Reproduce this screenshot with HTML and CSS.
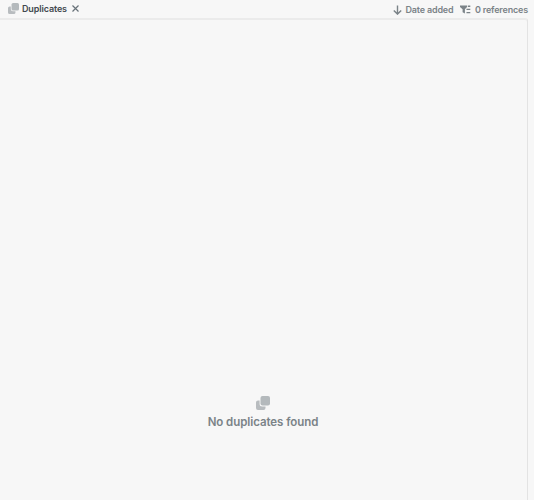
FILE: index.html
```html
<!DOCTYPE html>
<html lang="en">
<head>
<meta charset="utf-8">
<title>Duplicates</title>
<link rel="stylesheet" href="styles.css">
</head>
<body>
<header class="toolbar">
  <div class="tab">
    <svg class="tab-icon" viewBox="0 0 14 14"><path class="back" d="M3.6 4.5H2Q0 4.500 0 6.500V12Q0 14 2 14H7.500Q9.500 14 9.500 12V10.500H6.100Q3.600 10.500 3.600 8Z"/><rect class="front" x="4.500" y="0" width="9.500" height="9.500" rx="2"/></svg>
    <span class="tab-name">Duplicates</span>
    <svg class="close" viewBox="0 0 7 7"><path d="M.5.5 6.500 6.500M6.500.5.5 6.500"/></svg>
  </div>
  <div class="controls">
    <svg class="arrow" viewBox="0 0 9 10"><path d="M4.500.5V9M.8 5.400 4.500 9.100 8.200 5.400"/></svg>
    <span class="sort">Date added</span>
    <svg class="filter" viewBox="0 0 11 9"><path d="M0 .5H7V2L4.900 4.300V8.600L2.600 7.300V4.300L0 2Z"/><path d="M7.800 .6H10.300V1.900H7.800ZM6.500 3.800H10.300V5.100H6.500ZM6.500 7H10.300V8.300H6.500Z"/></svg>
    <span class="count">0 references</span>
  </div>
</header>
<main class="panel">
  <svg class="empty-icon" viewBox="0 0 14 14"><path class="back" d="M3.600 4.500H2Q0 4.500 0 6.500V12Q0 14 2 14H7.500Q9.500 14 9.500 12V10.500H6.100Q3.600 10.500 3.600 8Z"/><rect class="front" x="4.500" y="0" width="9.500" height="9.500" rx="2"/></svg>
  <p class="empty-text">No duplicates found</p>
</main>
</body>
</html>
```
FILE: styles.css
```css
* { box-sizing: border-box; }
body {
  margin: 0;
  height: 500px;
  overflow: hidden;
  background: #f7f7f7;
  font-family: Inter, "Liberation Sans", sans-serif;
  font-weight: 600;
  color: #7b8388;
}
svg { display: block; flex: none; }
.toolbar {
  display: flex;
  justify-content: space-between;
  height: 18px;
  padding: 0 6px 0 8px;
  font-size: 9px;
  line-height: 17px;
  white-space: nowrap;
}
.tab, .controls { display: flex; align-items: center; }
.tab { height: 17px; color: #42494e; letter-spacing: -.13px; }
.controls { height: 19px; letter-spacing: -.18px; }
.tab-icon { width: 11px; height: 11px; margin-right: 3px; }
.close { width: 7px; height: 7px; margin-left: 5px; }
.close path, .arrow path { fill: none; stroke: #687279; stroke-width: 1.2; }
.arrow { width: 9px; height: 10px; margin-right: 4px; }
.arrow path { stroke: #7b8388; stroke-width: 1.4; }
.filter { width: 11px; height: 9px; margin: 0 3.5px 0 7px; fill: #7b8388; }
.back { fill: #b8bcbf; }
.front { fill: #b4b9bc; }
.panel {
  display: flex;
  flex-direction: column;
  align-items: center;
  width: 528px;
  height: 482px;
  padding: 377px 1px 0 0;
  border-top: 1px solid #ebebeb;
  border-right: 1px solid #e3e3e3;
  border-top-right-radius: 3px;
  box-shadow: inset 0 1px 0 #ebebeb;
}
.empty-icon { width: 14px; height: 14px; }
.empty-text {
  margin: 4px 0 0;
  font-size: 11.5px;
  letter-spacing: -.06px;
  line-height: 16px;
}
```
